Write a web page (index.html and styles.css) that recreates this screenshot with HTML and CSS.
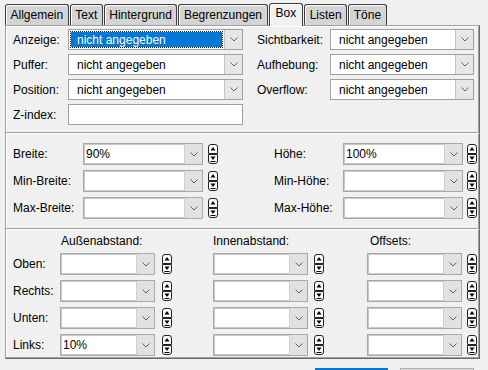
FILE: index.html
```html
<!DOCTYPE html>
<html>
<head>
<meta charset="utf-8">
<link rel="stylesheet" href="styles.css">
</head>
<body>
<svg width="0" height="0" class="defs">
  <defs>
    <symbol id="chev" viewBox="0 0 8 5"><polyline points="0.5,0.5 4,4 7.5,0.5" fill="none" stroke="#606060" stroke-width="1"/></symbol>
    <symbol id="spin" viewBox="0 0 10 20">
      <path d="M0.5 9.5 V3 Q0.5 0.5 3 0.5 H7 Q9.5 0.5 9.5 3 V9.5 Z" fill="#fafafa" stroke="#222"/>
      <path d="M0.5 10.5 V17 Q0.5 19.5 3 19.5 H7 Q9.5 19.5 9.5 17 V10.5 Z" fill="#fafafa" stroke="#222"/>
      <path d="M5 3 L7.5 6.5 H2.5 Z" fill="#000"/>
      <path d="M5 16 L7.5 12.5 H2.5 Z" fill="#000"/>
      <path d="M2.5 17.5 H7.5" stroke="#000"/>
    </symbol>
  </defs>
</svg>
<div class="tabs">
  <div class="tab">Allgemein</div>
  <div class="tab">Text</div>
  <div class="tab">Hintergrund</div>
  <div class="tab">Begrenzungen</div>
  <div class="tab active">Box</div>
  <div class="tab">Listen</div>
  <div class="tab">Töne</div>
</div>
<div class="panel">
  <div class="sec1">
    <span class="lbl">Anzeige:</span>
    <div class="combo focus"><span class="v">nicht angegeben</span><span class="b"><svg width="8" height="5"><use href="#chev"/></svg></span></div>
    <span class="lbl r">Sichtbarkeit:</span>
    <div class="combo rc"><span class="v">nicht angegeben</span><span class="b"><svg width="8" height="5"><use href="#chev"/></svg></span></div>

    <span class="lbl">Puffer:</span>
    <div class="combo"><span class="v">nicht angegeben</span><span class="b"><svg width="8" height="5"><use href="#chev"/></svg></span></div>
    <span class="lbl r">Aufhebung:</span>
    <div class="combo rc"><span class="v">nicht angegeben</span><span class="b"><svg width="8" height="5"><use href="#chev"/></svg></span></div>

    <span class="lbl">Position:</span>
    <div class="combo"><span class="v">nicht angegeben</span><span class="b"><svg width="8" height="5"><use href="#chev"/></svg></span></div>
    <span class="lbl r">Overflow:</span>
    <div class="combo rc"><span class="v">nicht angegeben</span><span class="b"><svg width="8" height="5"><use href="#chev"/></svg></span></div>

    <span class="lbl">Z-index:</span>
    <div class="input"></div>
  </div>
  <div class="sep"></div>
  <div class="sec2">
    <span class="lbl">Breite:</span>
    <div class="field"><div class="combo ed"><span class="v">90%</span><span class="b"><svg width="8" height="5"><use href="#chev"/></svg></span></div><svg class="spin" width="10" height="20"><use href="#spin"/></svg></div>
    <span class="lbl r2">Höhe:</span>
    <div class="field g4 rf"><div class="combo ed"><span class="v">100%</span><span class="b"><svg width="8" height="5"><use href="#chev"/></svg></span></div><svg class="spin" width="10" height="20"><use href="#spin"/></svg></div>

    <span class="lbl">Min-Breite:</span>
    <div class="field"><div class="combo ed"><span class="v"></span><span class="b"><svg width="8" height="5"><use href="#chev"/></svg></span></div><svg class="spin" width="10" height="20"><use href="#spin"/></svg></div>
    <span class="lbl r2">Min-Höhe:</span>
    <div class="field g4 rf"><div class="combo ed"><span class="v"></span><span class="b"><svg width="8" height="5"><use href="#chev"/></svg></span></div><svg class="spin" width="10" height="20"><use href="#spin"/></svg></div>

    <span class="lbl">Max-Breite:</span>
    <div class="field"><div class="combo ed"><span class="v"></span><span class="b"><svg width="8" height="5"><use href="#chev"/></svg></span></div><svg class="spin" width="10" height="20"><use href="#spin"/></svg></div>
    <span class="lbl r2">Max-Höhe:</span>
    <div class="field g4 rf"><div class="combo ed"><span class="v"></span><span class="b"><svg width="8" height="5"><use href="#chev"/></svg></span></div><svg class="spin" width="10" height="20"><use href="#spin"/></svg></div>
  </div>
  <div class="sep"></div>
  <div class="sec3">
    <span></span>
    <span class="hd h1">Außenabstand:</span>
    <span class="hd">Innenabstand:</span>
    <span class="hd h3">Offsets:</span>

    <span class="lbl">Oben:</span>
    <div class="field g7"><div class="combo ed"><span class="v"></span><span class="b"><svg width="8" height="5"><use href="#chev"/></svg></span></div><svg class="spin" width="10" height="20"><use href="#spin"/></svg></div>
    <div class="field g6"><div class="combo ed"><span class="v"></span><span class="b"><svg width="8" height="5"><use href="#chev"/></svg></span></div><svg class="spin" width="10" height="20"><use href="#spin"/></svg></div>
    <div class="field"><div class="combo ed"><span class="v"></span><span class="b"><svg width="8" height="5"><use href="#chev"/></svg></span></div><svg class="spin" width="10" height="20"><use href="#spin"/></svg></div>

    <span class="lbl">Rechts:</span>
    <div class="field g7"><div class="combo ed"><span class="v"></span><span class="b"><svg width="8" height="5"><use href="#chev"/></svg></span></div><svg class="spin" width="10" height="20"><use href="#spin"/></svg></div>
    <div class="field g6"><div class="combo ed"><span class="v"></span><span class="b"><svg width="8" height="5"><use href="#chev"/></svg></span></div><svg class="spin" width="10" height="20"><use href="#spin"/></svg></div>
    <div class="field"><div class="combo ed"><span class="v"></span><span class="b"><svg width="8" height="5"><use href="#chev"/></svg></span></div><svg class="spin" width="10" height="20"><use href="#spin"/></svg></div>

    <span class="lbl">Unten:</span>
    <div class="field g7"><div class="combo ed"><span class="v"></span><span class="b"><svg width="8" height="5"><use href="#chev"/></svg></span></div><svg class="spin" width="10" height="20"><use href="#spin"/></svg></div>
    <div class="field g6"><div class="combo ed"><span class="v"></span><span class="b"><svg width="8" height="5"><use href="#chev"/></svg></span></div><svg class="spin" width="10" height="20"><use href="#spin"/></svg></div>
    <div class="field"><div class="combo ed"><span class="v"></span><span class="b"><svg width="8" height="5"><use href="#chev"/></svg></span></div><svg class="spin" width="10" height="20"><use href="#spin"/></svg></div>

    <span class="lbl">Links:</span>
    <div class="field g7"><div class="combo ed"><span class="v">10%</span><span class="b"><svg width="8" height="5"><use href="#chev"/></svg></span></div><svg class="spin" width="10" height="20"><use href="#spin"/></svg></div>
    <div class="field g6"><div class="combo ed"><span class="v"></span><span class="b"><svg width="8" height="5"><use href="#chev"/></svg></span></div><svg class="spin" width="10" height="20"><use href="#spin"/></svg></div>
    <div class="field"><div class="combo ed"><span class="v"></span><span class="b"><svg width="8" height="5"><use href="#chev"/></svg></span></div><svg class="spin" width="10" height="20"><use href="#spin"/></svg></div>
  </div>
</div>
<div class="buttons">
  <div class="btn def"></div>
  <div class="btn"></div>
</div>
</body>
</html>
```
FILE: styles.css
```css
* { box-sizing: border-box; }
html, body { margin: 0; padding: 0; }
body {
  background: #f0f0f0;
  font: 12px "Liberation Sans", Arial, sans-serif;
  color: #000;
  width: 488px;
  height: 370px;
  overflow: hidden;
}
.defs { display: block; width: 0; height: 0; overflow: hidden; }

.tabs {
  display: flex;
  align-items: flex-end;
  height: 25px;
  padding-left: 5px;
  gap: 1px;
}
.tab {
  height: 21px;
  padding: 0 4.5px;
  border: 1px solid #3c3c3c;
  border-bottom: 0;
  border-radius: 3px 3px 0 0;
  background: #d4d4d4;
  box-shadow: inset 1px 1px 0 #fff;
  line-height: 20px;
  white-space: nowrap;
}
.tab.active {
  height: 23px;
  margin-bottom: -1px;
  background: #f0f0f0;
  position: relative;
  z-index: 1;
  padding: 0 6px;
  line-height: 19px;
}

.panel {
  margin-left: 5px;
  width: 475px;
  height: 334px;
  border: 1px solid;
  border-color: #a0a0a0 #696969 #696969 #a0a0a0;
  box-shadow: inset -1px -1px 0 #a0a0a0, inset 1px 1px 0 #fff;
}

.sep {
  height: 2px;
  border-top: 1px solid #a0a0a0;
  border-bottom: 1px solid #fff;
}

.lbl { align-self: center; white-space: nowrap; }

.sec1 {
  display: grid;
  grid-template-columns: 55px 175px 14px 73px 144px;
  grid-auto-rows: 21px;
  row-gap: 4px;
  padding: 3px 0 7px 7px;
}
.sec1 .lbl.r { grid-column: 4; }
.sec1 .combo.rc { grid-column: 5; }

.combo {
  display: flex;
  background: #fff;
  border: 1px solid #a0a0a0;
  height: 100%;
  min-width: 0;
}
.combo .v {
  flex: 1;
  padding-left: 8px;
  display: flex;
  align-items: center;
  white-space: nowrap;
  overflow: hidden;
}
.combo .b {
  width: 18px;
  background: #e6e6e6;
  border-left: 1px solid #c4c4c4;
  display: flex;
  align-items: center;
  justify-content: center;
}
.combo .b svg { display: block; }

.combo.focus .v {
  margin: 2px;
  padding-left: 6px;
  background: #0078d7;
  color: #fff;
  outline: 1px dotted #1a1a1a;
  outline-offset: 0;
}

.input {
  background: #fff;
  border: 1px solid #a0a0a0;
  height: 100%;
}

.sec2 {
  display: grid;
  grid-template-columns: 70px 135px 56px 69px 134px;
  grid-auto-rows: 22px;
  row-gap: 5px;
  padding: 9px 0 9px 7px;
}
.sec2 .lbl.r2 { grid-column: 4; }
.sec2 .field.rf { grid-column: 5; }

.field {
  display: flex;
  align-items: center;
  gap: 5px;
  height: 22px;
}
.field .combo { width: 120px; flex: none; }
.field.g4 { gap: 4px; }
.field .spin { display: block; flex: none; }

.combo.ed { border-color: #a8a8a8; box-shadow: inset 0 0 0 1px #c8c8c8; }
.combo.ed .v { padding-left: 2px; }
.combo.ed .b { background: #e1e1e1; border-left: 1px solid #cfcfcf; }

.sec3 {
  display: grid;
  grid-template-columns: 47px 153px 154px 110px;
  grid-template-rows: 14px repeat(4, 22px);
  row-gap: 5px;
  padding: 4px 0 0 7px;
}
.sec3 .field .combo { width: 95px; }
.sec3 .field.g7 { gap: 7px; }
.sec3 .field.g6 { gap: 6px; }
.hd { line-height: 14px; white-space: nowrap; }
.hd.h1 { padding-left: 1px; }
.hd.h3 { padding-left: 3px; }

.buttons {
  display: flex;
  justify-content: flex-end;
  gap: 12px;
  padding-right: 14px;
  margin-top: 9px;
}
.btn {
  width: 74px;
  height: 23px;
  border: 1px solid #adadad;
  background: #e1e1e1;
}
.btn.def {
  width: 73px;
  border-color: #0078d7;
  box-shadow: inset 0 0 0 1px #0078d7;
}
```
